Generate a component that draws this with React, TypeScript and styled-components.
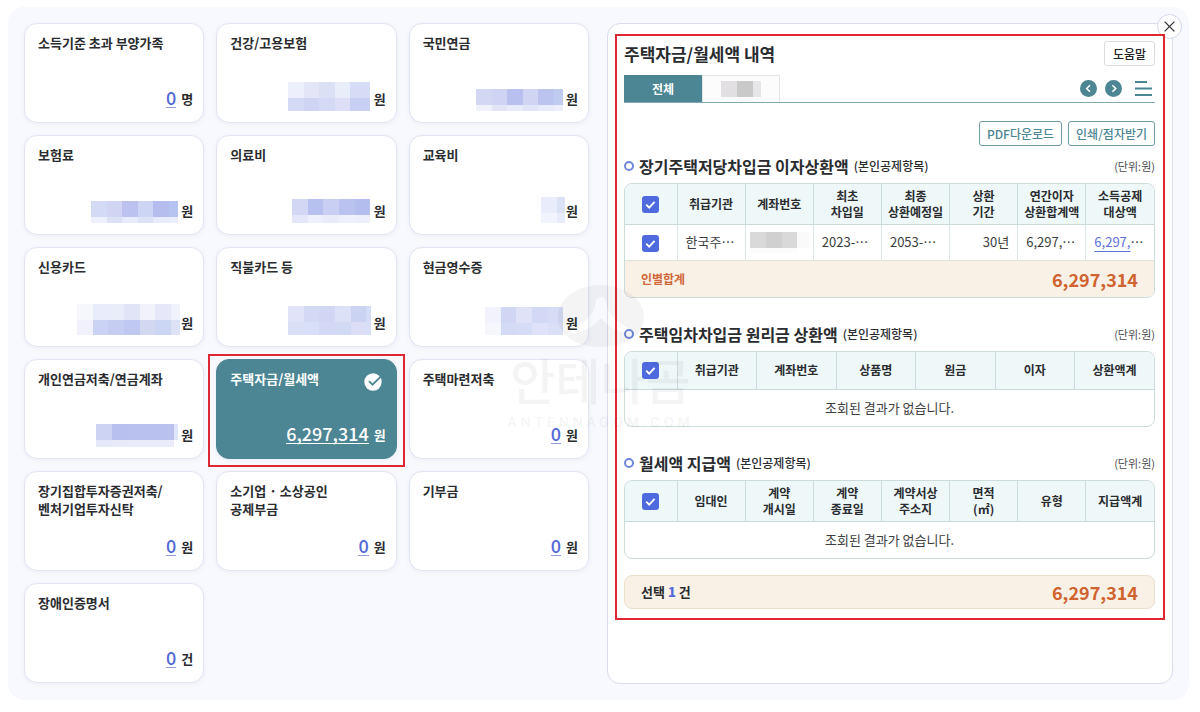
import React from "react";
import styled, { createGlobalStyle, css } from "styled-components";

const GlobalStyle = createGlobalStyle`
  *, *::before, *::after { box-sizing: border-box; }
  body {
    margin: 0;
    background: #ffffff;
    color: #2a2c30;
    font-family: "Noto Sans CJK KR", "Noto Sans", sans-serif;
    font-size: 13px;
    font-weight: 700;
    line-height: 18px;
  }
  button { font-family: inherit; font-weight: inherit; cursor: pointer; }
`;

const Page = styled.main`
  position: relative;
  display: grid;
  grid-template-columns: minmax(0, 565fr) minmax(0, 566fr);
  gap: 18px;
  margin: 7px 11px 12px 8px;
  padding: 16px;
  background: #f8f9fe;
  border-radius: 16px;
`;

const CardGrid = styled.section`
  display: grid;
  grid-template-columns: repeat(3, minmax(0, 1fr));
  grid-auto-rows: 100px;
  align-content: start;
  gap: 12px;
`;

const Card = styled.article<{ $selected?: boolean }>`
  position: relative;
  display: flex;
  flex-direction: column;
  justify-content: space-between;
  padding: 10px 10px 11px 13px;
  background: #ffffff;
  border: 1px solid #e1e4f3;
  border-radius: 13px;
  box-shadow: 0 1px 4px rgba(90, 100, 180, 0.08);
  ${(p) =>
    p.$selected &&
    css`
      background: #4c8593;
      border-color: #4c8593;
      color: #ffffff;
    `}
`;

const CardHead = styled.div`
  display: flex;
  justify-content: space-between;
  padding-right: 4px;
`;

const CardTitle = styled.h3`
  margin: 0;
  font-size: 13px;
  font-weight: 700;
  line-height: 18px;
  white-space: pre-line;
`;

const CardValue = styled.div<{ $gap: number }>`
  display: flex;
  justify-content: flex-end;
  align-items: flex-end;
  gap: ${(p) => p.$gap}px;
`;

const Amount = styled.a<{ $light?: boolean }>`
  margin-bottom: 3px;
  border-bottom: 1px solid ${(p) => (p.$light ? "#ffffff" : "#8e9ce2")};
  color: ${(p) => (p.$light ? "#ffffff" : "#5369d6")};
  font-size: 18px;
  font-weight: 500;
  line-height: 20px;
  text-decoration: none;
`;

const Unit = styled.span`
  margin-bottom: 3px;
  line-height: 18px;
`;

const Marker = styled.div`
  position: absolute;
  inset: -6px -9px -9px -9px;
  border: 2px solid #dd2831;
  pointer-events: none;
`;

const CheckBadge = styled.svg`
  margin-top: 3px;
`;

const Panel = styled.section`
  position: relative;
  padding: 10px 7px 63px;
  background: #ffffff;
  border: 1px solid #d9dcee;
  border-radius: 13px;
`;

const PanelBody = styled.div`
  position: relative;
  z-index: 2;
  padding: 5px 8px 9px 7px;
  border: 2px solid #dd2831;
`;

const CloseButton = styled.button`
  position: absolute;
  z-index: 1;
  top: -10px;
  right: -10px;
  display: grid;
  place-items: center;
  width: 25px;
  height: 25px;
  padding: 0;
  background: #ffffff;
  border: 1px solid #d3d7ee;
  border-radius: 50%;
`;

const PanelHead = styled.header`
  display: flex;
  align-items: center;
  justify-content: space-between;
`;

const PanelTitle = styled.h2`
  margin: 0;
  font-size: 17px;
  font-weight: 700;
  line-height: 24px;
`;

const HelpButton = styled.button`
  height: 25px;
  padding: 0 8px;
  background: #ffffff;
  border: 1px solid #dcdcdf;
  border-radius: 3px;
  color: #222428;
  font-size: 12px;
  font-weight: 500;
  line-height: 18px;
`;

const TabBar = styled.nav`
  display: flex;
  justify-content: space-between;
  margin-top: 9px;
  border-bottom: 1px solid #7fa9b4;
`;

const TabGroup = styled.div`
  display: flex;
`;

const Tab = styled.button<{ $active?: boolean }>`
  display: grid;
  place-items: center;
  width: 78px;
  height: 27px;
  padding: 0;
  border: 1px solid ${(p) => (p.$active ? "#4c8593" : "#e4e4e6")};
  border-bottom: 0;
  background: ${(p) => (p.$active ? "#4c8593" : "#fcfcfc")};
  color: #ffffff;
  font-size: 12px;
  line-height: 18px;
`;

const TabTools = styled.div`
  display: flex;
  align-items: center;
  gap: 8px;
`;

const IconButton = styled.button`
  display: grid;
  place-items: center;
  padding: 0;
  border: 0;
  background: none;
`;

const MenuButton = styled(IconButton)`
  margin: 0 3px 0 5px;
`;

const Actions = styled.div`
  display: flex;
  justify-content: flex-end;
  gap: 6px;
  margin-top: 18px;
`;

const OutlineButton = styled.button`
  height: 25px;
  padding: 0 7px;
  background: #ffffff;
  border: 1px solid #6d9ba7;
  border-radius: 3px;
  color: #4c8593;
  font-size: 12px;
  font-weight: 500;
  line-height: 18px;
`;

const Block = styled.section<{ $gap: number }>`
  margin-top: ${(p) => p.$gap}px;
`;

const BlockHead = styled.header`
  display: flex;
  align-items: center;
  gap: 5px;
  height: 24px;
  margin-bottom: 5px;
`;

const Ring = styled.span`
  width: 10px;
  height: 10px;
  border: 2px solid #6f88dd;
  border-radius: 50%;
`;

const BlockTitle = styled.h3`
  margin: 0;
  font-size: 16px;
  font-weight: 700;
  line-height: 24px;
`;

const BlockNote = styled.span`
  font-size: 12px;
  font-weight: 500;
  line-height: 18px;
`;

const UnitNote = styled.span`
  margin-left: auto;
  color: #4b4d52;
  font-size: 11px;
  font-weight: 400;
  line-height: 18px;
`;

const TableFrame = styled.div`
  overflow: hidden;
  border: 1px solid #cbdcdc;
  border-radius: 8px;
`;

const Table = styled.table`
  width: 100%;
  border-collapse: collapse;
  table-layout: fixed;
`;

const HeadCell = styled.th<{ $narrow?: boolean; $tall?: boolean }>`
  width: ${(p) => (p.$narrow ? "52px" : "auto")};
  height: ${(p) => (p.$tall ? 40 : 37)}px;
  padding: 0;
  background: #eef8f8;
  border-bottom: 1px solid #c9dada;
  font-size: 12px;
  font-weight: 700;
  line-height: 16px;
  white-space: pre-line;
  & + & { border-left: 1px solid #cbdcdc; }
`;

const Cell = styled.td<{ $align?: "left" | "center" | "right" }>`
  height: 36px;
  padding: 0 8px;
  border-left: 1px solid #dbe8e8;
  color: #3c3e42;
  font-size: 13px;
  font-weight: 400;
  line-height: 18px;
  text-align: ${(p) => p.$align ?? "left"};
  white-space: nowrap;
  &:first-child { border-left: 0; }
`;

const EmptyCell = styled(Cell)`
  height: 37px;
`;

const AccountMask = styled.div`
  display: flex;
  margin: 0 -4px;
`;

const CellLink = styled.a`
  color: #5b70d8;
  text-decoration: underline;
  text-underline-offset: 4px;
`;

const CheckLabel = styled.label`
  display: inline-grid;
  place-items: center;
  vertical-align: middle;
  & > * { grid-area: 1 / 1; }
`;

const CheckInput = styled.input`
  appearance: none;
  width: 17px;
  height: 17px;
  margin: 0;
  border-radius: 3px;
  background: #4f6ade;
`;

const CheckMark = styled.svg`
  pointer-events: none;
`;

const SumRow = styled.div`
  display: flex;
  align-items: center;
  justify-content: space-between;
  height: 37px;
  padding: 0 16px;
  background: #faf1e6;
  border-top: 1px solid #dde4dc;
  color: #d0683a;
  font-size: 12px;
`;

const Sum = styled.strong`
  color: #d0632f;
  font-size: 18px;
  font-weight: 700;
  line-height: 24px;
`;

const TotalBar = styled(SumRow)`
  height: 34px;
  margin-top: 16px;
  border: 1px solid #ecdfcb;
  border-radius: 8px;
  color: #2a2c30;
  font-size: 13px;
`;

const Count = styled.b`
  color: #5369d6;
`;

const Watermark = styled.div`
  position: absolute;
  z-index: 3;
  top: 278px;
  left: 50%;
  display: flex;
  flex-direction: column;
  align-items: center;
  padding-left: 4px;
  transform: translateX(-50%);
  opacity: 0.04;
  color: #000000;
  font-weight: 500;
  pointer-events: none;
`;

const WatermarkName = styled.span`
  margin-top: 5px;
  font-size: 49px;
  line-height: 54px;
`;

const WatermarkSite = styled.span`
  margin-top: 7px;
  font-family: "Inter", sans-serif;
  font-size: 13px;
  letter-spacing: 4px;
  line-height: 18px;
`;

type MosaicSpec = { cols: number[]; rows: number[]; fill: string[][] };

function Mosaic({ cols, rows, fill }: MosaicSpec) {
  const width = cols.reduce((a, b) => a + b, 0);
  const height = rows.reduce((a, b) => a + b, 0);
  const start = (list: number[], i: number) => list.slice(0, i).reduce((a, b) => a + b, 0);
  return (
    <svg width={width} height={height} shapeRendering="crispEdges" aria-hidden="true">
      {fill.map((line, r) =>
        line.map((color, c) => (
          <rect key={`${r}-${c}`} x={start(cols, c)} y={start(rows, r)} width={cols[c]} height={rows[r]} fill={color} />
        ))
      )}
    </svg>
  );
}

function Check({ label }: { label: string }) {
  return (
    <CheckLabel>
      <CheckInput type="checkbox" defaultChecked aria-label={label} />
      <CheckMark width="17" height="17" viewBox="0 0 17 17" fill="none" stroke="#fff" strokeWidth="1.8">
        <path d="M4.200 8.600l3 3 5.400-5.800" />
      </CheckMark>
    </CheckLabel>
  );
}

type CardData = {
  title: string;
  unit: string;
  value?: string;
  selected?: boolean;
  gap?: number;
  mosaic?: MosaicSpec;
};

const cards: CardData[] = [
  { title: "소득기준 초과 부양가족", unit: "명", value: "0" },
  {
    title: "건강/고용보험", unit: "원", gap: 4,
    mosaic: { cols: [16, 15, 16, 15, 20], rows: [16, 13], fill: [["#eeeffc", "#e5e5f8", "#dbe0f5", "#e9ecf9", "#d7dcf6"], ["#d3daf5", "#d0d3f3", "#d4daf6", "#dedff7", "#c7d0f3"]] },
  },
  {
    title: "국민연금", unit: "원", gap: 3,
    mosaic: { cols: [16, 15, 16, 15, 16, 9], rows: [16, 6], fill: [["#d4d7f4", "#cfd4f4", "#b7c0ee", "#cfd5f3", "#bac4ef", "#c0cbf0"], ["#f1f1fc", "#e3e5f7", "#e9ebfa", "#e2e4f7", "#e9ebfb", "#eceefb"]] },
  },
  {
    title: "보험료", unit: "원", gap: 3,
    mosaic: { cols: [16, 15, 16, 15, 16, 9], rows: [16, 6], fill: [["#d2daf5", "#d1d5f3", "#bcc2ef", "#ccd5f4", "#b5bdee", "#b6c3f0"], ["#eef0fd", "#dde1f6", "#e8ebfb", "#dde2f6", "#e7ebfb", "#eaedfb"]] },
  },
  {
    title: "의료비", unit: "원", gap: 4,
    mosaic: { cols: [16, 15, 16, 16, 15], rows: [16, 8], fill: [["#d2d8f4", "#b6c1ef", "#c8cff2", "#bac2ef", "#b4beee"], ["#e4e7f9", "#eef0fd", "#e9ebfa", "#eef0fd", "#eeeffd"]] },
  },
  { title: "교육비", unit: "원", gap: 1, mosaic: { cols: [16, 8], rows: [16, 10], fill: [["#e9ecfa", "#dbe2f6"], ["#f1f3fd", "#e7ebfb"]] } },
  {
    title: "신용카드", unit: "원", gap: 1,
    mosaic: { cols: [16, 15, 16, 16, 15, 16, 9], rows: [16, 15], fill: [["#f6f7fc", "#e9ecfb", "#e9ecf9", "#e0e4f6", "#f1f2fa", "#e6e8f9", "#eff1fc"], ["#f0f1fc", "#cad3f3", "#c5cdf1", "#bfc8f0", "#d3d8f1", "#cbd6f5", "#dde2f7"]] },
  },
  {
    title: "직불카드 등", unit: "원", gap: 3,
    mosaic: { cols: [16, 15, 16, 16, 15, 5], rows: [16, 13], fill: [["#e1e4f8", "#d3d8f5", "#d0d6f4", "#dce1f7", "#cbd3f3", "#d5dcf7"], ["#dadff6", "#d8dff8", "#d2d8f6", "#d1daf5", "#dcdef5", "#d6def8"]] },
  },
  {
    title: "현금영수증", unit: "원", gap: 3,
    mosaic: { cols: [16, 15, 16, 16, 15], rows: [16, 12], fill: [["#f1f2fb", "#d0d6f4", "#e0e2f8", "#d2d8f5", "#d7dcf6"], ["#f6f7fd", "#d2daf5", "#d5dcf6", "#e0e2f9", "#dadff6"]] },
  },
  {
    title: "개인연금저축/연금계좌", unit: "원", gap: 3,
    mosaic: { cols: [16, 15, 16, 16, 15, 4], rows: [16, 7], fill: [["#cdd3f2", "#b7c0ee", "#b9c2ef", "#b9c2ef", "#b9c1ee", "#dfe6fb"], ["#e5e8f9", "#e8eafa", "#eaecfb", "#eaecfb", "#eaecfb", "#ffffff"]] },
  },
  { title: "주택자금/월세액", unit: "원", value: "6,297,314", selected: true },
  { title: "주택마련저축", unit: "원", value: "0" },
  { title: "장기집합투자증권저축/\n벤처기업투자신탁", unit: "원", value: "0" },
  { title: "소기업 · 소상공인\n공제부금", unit: "원", value: "0" },
  { title: "기부금", unit: "원", value: "0" },
  { title: "장애인증명서", unit: "건", value: "0" },
];

const tabMosaic: MosaicSpec = { cols: [16, 16, 8], rows: [16], fill: [["#e1dfe1", "#c9c9ca", "#e6e6e8"]] };
const accountMosaic: MosaicSpec = { cols: [16, 16, 15, 14], rows: [16, 5], fill: [["#d9d9da", "#d0d0d1", "#d9d9da", "#fafafa"], ["#fcfcfc", "#fcfcfc", "#fcfcfc", "#ffffff"]] };

function Heading({ title }: { title: string }) {
  return (
    <BlockHead>
      <Ring />
      <BlockTitle>{title}</BlockTitle>
      <BlockNote>(본인공제항목)</BlockNote>
      <UnitNote>(단위:원)</UnitNote>
    </BlockHead>
  );
}

function TableHead({ labels, tall }: { labels: string[]; tall?: boolean }) {
  return (
    <thead>
      <tr>
        <HeadCell $narrow $tall={tall}><Check label="전체 선택" /></HeadCell>
        {labels.map((label) => (
          <HeadCell key={label} $tall={tall}>{label}</HeadCell>
        ))}
      </tr>
    </thead>
  );
}

function EmptyTable({ labels, tall }: { labels: string[]; tall?: boolean }) {
  return (
    <TableFrame>
      <Table>
        <TableHead labels={labels} tall={tall} />
        <tbody>
          <tr>
            <EmptyCell colSpan={labels.length + 1} $align="center">조회된 결과가 없습니다.</EmptyCell>
          </tr>
        </tbody>
      </Table>
    </TableFrame>
  );
}

function Arrow({ d }: { d: string }) {
  return (
    <svg width="17" height="17" viewBox="0 0 17 17" fill="none">
      <circle cx="8.5" cy="8.5" r="8.5" fill="#4c8593" />
      <path d={d} stroke="#fff" strokeWidth="1.6" />
    </svg>
  );
}

export default function App() {
  return (
    <>
      <GlobalStyle />
      <Page>
        <CardGrid>
          {cards.map((card) => (
            <Card key={card.title} $selected={card.selected}>
              <CardHead>
                <CardTitle>{card.title}</CardTitle>
                {card.selected && (
                  <CheckBadge width="18" height="18" viewBox="0 0 18 18" fill="none">
                    <circle cx="9" cy="9" r="8.7" fill="#fff" />
                    <path d="M5 8.200l3.500 3.500L17 3.400" stroke="#4c8593" strokeWidth="1.8" />
                  </CheckBadge>
                )}
              </CardHead>
              <CardValue $gap={card.gap ?? 5}>
                {card.mosaic && <Mosaic {...card.mosaic} />}
                {card.value && <Amount href="#" $light={card.selected}>{card.value}</Amount>}
                <Unit>{card.unit}</Unit>
              </CardValue>
              {card.selected && <Marker />}
            </Card>
          ))}
        </CardGrid>

        <Panel>
          <CloseButton aria-label="닫기">
            <svg width="11" height="11" viewBox="0 0 11 11" stroke="#333" strokeWidth="1.3">
              <path d="M.6.6l9.800 9.800M10.400.6L.6 10.400" />
            </svg>
          </CloseButton>
          <PanelBody>
            <PanelHead>
              <PanelTitle>주택자금/월세액 내역</PanelTitle>
              <HelpButton>도움말</HelpButton>
            </PanelHead>
            <TabBar>
              <TabGroup>
                <Tab $active>전체</Tab>
                <Tab aria-label="가족"><Mosaic {...tabMosaic} /></Tab>
              </TabGroup>
              <TabTools>
                <IconButton aria-label="이전"><Arrow d="M10 5.200L6.700 8.500 10 11.800" /></IconButton>
                <IconButton aria-label="다음"><Arrow d="M7.400 5.200l3.300 3.300-3.300 3.300" /></IconButton>
                <MenuButton aria-label="메뉴">
                  <svg width="17" height="15" viewBox="0 0 17 15" fill="#4c8593">
                    <path d="M0 0h12v2H0zM0 6.500h17v2H0zM0 13h17v2H0z" />
                  </svg>
                </MenuButton>
              </TabTools>
            </TabBar>
            <Actions>
              <OutlineButton>PDF다운로드</OutlineButton>
              <OutlineButton>인쇄/점자받기</OutlineButton>
            </Actions>

            <Block $gap={8}>
              <Heading title="장기주택저당차입금 이자상환액" />
              <TableFrame>
                <Table>
                  <TableHead
                    tall
                    labels={["취급기관", "계좌번호", "최초\n차입일", "최종\n상환예정일", "상환\n기간", "연간이자\n상환합계액", "소득공제\n대상액"]}
                  />
                  <tbody>
                    <tr>
                      <Cell $align="center"><Check label="한국주 선택" /></Cell>
                      <Cell>한국주⋯</Cell>
                      <Cell><AccountMask><Mosaic {...accountMosaic} /></AccountMask></Cell>
                      <Cell>2023-⋯</Cell>
                      <Cell>2053-⋯</Cell>
                      <Cell $align="right">30년</Cell>
                      <Cell>6,297,⋯</Cell>
                      <Cell><CellLink href="#">6,297,</CellLink>⋯</Cell>
                    </tr>
                  </tbody>
                </Table>
                <SumRow>
                  <span>인별합계</span>
                  <Sum>6,297,314</Sum>
                </SumRow>
              </TableFrame>
            </Block>

            <Block $gap={24}>
              <Heading title="주택임차차입금 원리금 상환액" />
              <EmptyTable labels={["취급기관", "계좌번호", "상품명", "원금", "이자", "상환액계"]} />
            </Block>

            <Block $gap={24}>
              <Heading title="월세액 지급액" />
              <EmptyTable tall labels={["임대인", "계약\n개시일", "계약\n종료일", "계약서상\n주소지", "면적\n(㎡)", "유형", "지급액계"]} />
            </Block>

            <TotalBar>
              <span>선택 <Count>1</Count> 건</span>
              <Sum>6,297,314</Sum>
            </TotalBar>
          </PanelBody>
        </Panel>

        <Watermark>
          <svg width="88" height="62" viewBox="0 0 88 62">
            <path
              fillRule="evenodd"
              d="M44 0C68 0 87 14 87 32C87 50 68 62 44 62C20 62 1 50 1 32C1 14 20 0 44 0ZM44 12C40 12 39 15 38.500 19C37.500 28 31 35 14 45C12 47 15 49 19 48C29 46 37 41 44 33C51 41 59 46 69 48C73 49 76 47 74 45C57 35 50.500 28 49.500 19C49 15 48 12 44 12Z"
            />
          </svg>
          <WatermarkName>안테나곰</WatermarkName>
          <WatermarkSite>ANTENNAGOM.COM</WatermarkSite>
        </Watermark>
      </Page>
    </>
  );
}
